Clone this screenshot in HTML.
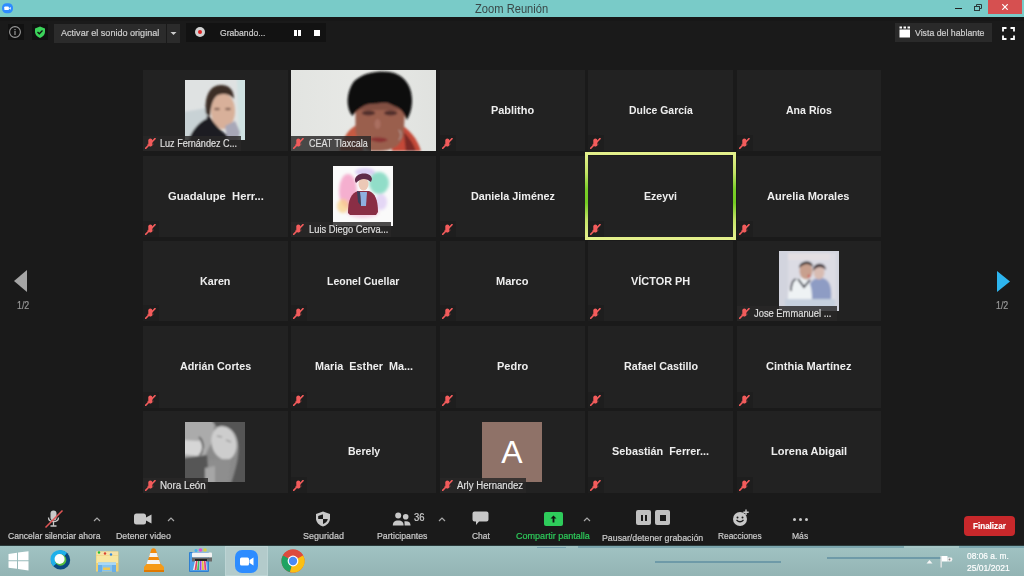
<!DOCTYPE html>
<html><head><meta charset="utf-8">
<style>
*{margin:0;padding:0;box-sizing:border-box}
html,body{width:1024px;height:576px;overflow:hidden;background:#1a1a1a;font-family:"Liberation Sans",sans-serif;position:relative}
.a{position:absolute}
#title{left:0;top:0;width:1024px;height:17px;background:#79cbc8}
#title .t{font-size:12px;color:#3a4848;line-height:15px;white-space:pre}
.tb{position:absolute;color:#cdcdcd;font-size:9.5px;white-space:pre;line-height:11px;-webkit-text-stroke:0.2px currentColor}

.tile{position:absolute;width:144px;height:81px;background:#222}
.nm{position:absolute;top:32.6px;font-weight:bold;font-size:11.5px;color:#eee;white-space:pre;line-height:14px;transform-origin:0 0}
.mic{position:absolute}
.mb{position:absolute;left:0;bottom:0;width:16px;height:16px;background:#1e1e1e}
.mb .mic{left:2px;bottom:2px}
.hl{position:absolute;left:-3px;top:-4px;right:-3px;bottom:-3px;border:3.6px solid #dcee7a;border-image:linear-gradient(#e4f08c 0%,#c4e466 22%,#7acf28 42%,#74cc22 58%,#c4e466 78%,#e4f08c 100%) 1}
.ph{position:absolute;width:60px;height:60px;left:42px;top:10px;background:#ccc;overflow:hidden}
.ph svg,.vid svg{display:block}
.vid{position:absolute;left:0;top:0;width:100%;height:100%;background:#e6e8e6}
.vid svg{width:100%;height:100%}
.av{background:#8f7268;color:#fff;font-size:32px;text-align:center;line-height:60px}
.lab{position:absolute;left:0;bottom:0;height:15.5px;background:rgba(41,40,40,.83)}
.lab .mic{left:2px;bottom:2.5px}
.lab span{position:absolute;top:1.9px;color:#e0e0e0;-webkit-text-stroke:0.15px currentColor;font-size:10px;line-height:14px;white-space:pre;transform-origin:0 0}
</style></head><body>
<div id="title" class="a">
 <svg class="a" style="left:2px;top:3px" width="11" height="10.5" viewBox="0 0 12 11"><rect x="0" y="0" width="12" height="11" rx="5" fill="#2d8cff"/><rect x="2.5" y="3.5" width="5" height="4" rx="1" fill="#fff"/><path d="M7.5 5.5 L9.5 4 V7 Z" fill="#fff"/></svg>
 <div class="a t" style="left:475px;width:auto;top:1.5px;transform:scaleX(.93);transform-origin:0 0">Zoom Reunión</div>
 <div class="a" style="left:955px;top:8px;width:7px;height:1.3px;background:#222"></div>
 <svg class="a" style="left:974px;top:4px" width="8" height="7" viewBox="0 0 8 7"><rect x="0.5" y="2.5" width="5" height="4" fill="none" stroke="#2a3a3a" stroke-width="1"/><path d="M2.5 2.5 V0.5 H7.5 V4.5 H5.5" fill="none" stroke="#2a3a3a" stroke-width="1"/></svg>
 <div class="a" style="left:988px;top:0;width:34px;height:14px;background:#d65050"></div>
 <svg class="a" style="left:1002px;top:4px" width="6" height="6" viewBox="0 0 6 6"><path d="M0.3 0.3 L5.7 5.7 M5.7 0.3 L0.3 5.7" stroke="#fff" stroke-width="1.2"/></svg>
</div>

<!-- top toolbar -->
<div class="a" style="left:0;top:17px;width:1024px;height:4px;background:#171717"></div>
<div class="a" style="left:8px;top:24px;width:16px;height:16px;background:#111"></div>
<svg class="a" style="left:8px;top:25px" width="14" height="14" viewBox="0 0 14 14"><circle cx="7" cy="7" r="5.4" fill="none" stroke="#9a9a9a" stroke-width="1.1"/><rect x="6.4" y="6" width="1.2" height="4" fill="#9a9a9a"/><rect x="6.4" y="4" width="1.2" height="1.2" fill="#9a9a9a"/></svg>
<div class="a" style="left:32px;top:24px;width:16px;height:16px;background:#111"></div>
<svg class="a" style="left:33px;top:25px" width="14" height="14" viewBox="0 0 14 14"><path d="M7 1.5 L12 3.5 V7 C12 10 9.5 12 7 13 C4.5 12 2 10 2 7 V3.5 Z" fill="#3bd35a"/><path d="M4.5 7 L6.3 8.8 L9.5 5.5" fill="none" stroke="#111" stroke-width="1.3"/></svg>
<div class="a" style="left:54px;top:24px;width:112px;height:19px;background:#2b2b2b"></div>
<div class="a" style="left:167px;top:24px;width:13px;height:19px;background:#2b2b2b"></div>
<svg class="a" style="left:170px;top:31px" width="7" height="5" viewBox="0 0 7 5"><path d="M0.5 1 H6.5 L3.5 4 Z" fill="#ccc"/></svg>
<div class="tb" style="left:60.70px;top:27px;color:#d0d0d0;transform:scaleX(0.9544);transform-origin:0 0">Activar el sonido original</div>
<div class="a" style="left:186px;top:23px;width:140px;height:19px;background:#121212"></div>
<svg class="a" style="left:194px;top:26px" width="12" height="12" viewBox="0 0 12 12"><circle cx="6" cy="6" r="5" fill="#d0d0d0"/><circle cx="6" cy="6" r="2" fill="#e02020"/></svg>
<div class="tb" style="left:219.80px;top:27px;color:#d0d0d0;transform:scaleX(0.9040);transform-origin:0 0">Grabando...</div>
<div class="a" style="left:294px;top:30px;width:2.5px;height:6px;background:#fff"></div>
<div class="a" style="left:298px;top:30px;width:2.5px;height:6px;background:#fff"></div>
<div class="a" style="left:314px;top:30px;width:6px;height:6px;background:#fff"></div>

<div class="a" style="left:895px;top:23px;width:97px;height:19px;background:#2a2a2a"></div>
<svg class="a" style="left:899px;top:26px" width="12" height="12" viewBox="0 0 12 12"><rect x="0.5" y="3.5" width="10.5" height="8" fill="#fff"/><rect x="0.5" y="0.5" width="2.5" height="2" fill="#fff"/><rect x="4.5" y="0.5" width="2.5" height="2" fill="#fff"/><rect x="8.5" y="0.5" width="2.5" height="2" fill="#fff"/></svg>
<div class="tb" style="left:914.90px;top:27px;color:#d0d0d0;transform:scaleX(0.9213);transform-origin:0 0">Vista del hablante</div>
<svg class="a" style="left:1002px;top:27px" width="13" height="13" viewBox="0 0 13 13"><path d="M1 4.5 V1 H4.5 M8.5 1 H12 V4.5 M12 8.5 V12 H8.5 M4.5 12 H1 V8.5" fill="none" stroke="#fff" stroke-width="1.8"/></svg>

<!-- side arrows -->
<svg class="a" style="left:13px;top:269px" width="16" height="24" viewBox="0 0 16 24"><path d="M1 12 L14 1 V23 Z" fill="#a5a5a5"/></svg>
<div class="tb" style="left:17px;top:299.5px;color:#999;font-size:10.5px;transform:scaleX(.84);transform-origin:0 0">1/2</div>
<svg class="a" style="left:996px;top:270px" width="16" height="24" viewBox="0 0 16 24"><path d="M1 1 L14 11.5 L1 22 Z" fill="#2db5ef"/></svg>
<div class="tb" style="left:996.3px;top:299.5px;color:#999;font-size:10.5px;transform:scaleX(.84);transform-origin:0 0">1/2</div>

<!--GRID-->
<div id="grid">
<div class="tile" style="left:143px;top:70px;width:145px;height:81px"><div class="ph" style="top:10px"><svg width="60" height="60" viewBox="0 0 60 60"><defs><filter id="blluz" x="-10%" y="-10%" width="120%" height="120%"><feGaussianBlur stdDeviation="0.9"/></filter></defs><rect width="60" height="60" fill="#dfe2e2"/><g filter="url(#blluz)">
<path d="M-2 32 L22 28 L24 62 L-2 62 Z" fill="#c3ced2" opacity=".8"/>
<path d="M52 -2 L62 -2 L62 62 L54 62 Z" fill="#cde2e2" opacity=".9"/>
<ellipse cx="38" cy="31" rx="12" ry="18" fill="#d8b09a"/>
<ellipse cx="32" cy="29" rx="3" ry="1.3" fill="#6a4a40" opacity=".8"/><ellipse cx="43" cy="29" rx="3" ry="1.3" fill="#6a4a40" opacity=".8"/>
<path d="M21 34 C19 16 25 5 36 5 C45 5 49 11 49 19 C45 14 39 13 33 15 C28 18 26 25 25 36 Z" fill="#3d2d25"/>
<circle cx="23" cy="37" r="1.5" fill="#2a1a15"/>
<path d="M3 62 C7 49 15 41 25 37 C30 45 38 54 48 58 L50 62 Z" fill="#1c1c21"/>
<path d="M40 46 L50 41 L55 52 L53 62 L43 62 Z" fill="#a8a8b8"/>
</g></svg></div><div class="lab" style="width:98.4px"><svg class="mic" width="11" height="11" viewBox="0 0 12 12"><rect x="3.6" y="0.6" width="4.4" height="8.6" rx="2.2" fill="#f35c5c"/><path d="M2.2 6.5 Q5.8 11 9.4 6.5" fill="none" stroke="#f35c5c" stroke-width=".8" opacity=".6"/><path d="M0.8 11.2 L10.8 0.8" stroke="#f35c5c" stroke-width="1.9" stroke-linecap="round"/></svg><span style="left:17.20px;transform:scaleX(0.9071)">Luz Fernández C...</span></div></div>
<div class="tile video" style="left:291px;top:70px;width:145px;height:81px"><div class="vid"><svg width="144" height="81" viewBox="0 0 144 81" preserveAspectRatio="none"><defs><filter id="blceat" x="-10%" y="-10%" width="120%" height="120%"><feGaussianBlur stdDeviation="1.3"/></filter><linearGradient id="gceat" x1="0" y1="0" x2="1" y2="0"><stop offset="0" stop-color="#e2e4e1"/><stop offset=".5" stop-color="#e8e9e6"/><stop offset="1" stop-color="#e0e2df"/></linearGradient></defs>
<rect width="144" height="81" fill="url(#gceat)"/><g filter="url(#blceat)">
<path d="M48 81 C52 66 58 58 66 55 L72 81 Z" fill="#c65a42"/>
<path d="M104 52 C118 58 126 70 129 81 L100 81 Z" fill="#c44a38"/>
<path d="M112 62 C118 68 122 74 124 81 L114 81 Z" fill="#7a2a26"/>
<path d="M64 40 C64 34 72 30 88 30 C104 30 113 34 113 42 L112 64 C110 76 100 81 88 81 L80 81 C70 78 65 70 64 60 Z" fill="#9a5e4e"/>
<ellipse cx="77" cy="43" rx="6.5" ry="2.6" fill="#3e2020" opacity=".8"/>
<ellipse cx="99" cy="43" rx="6.5" ry="2.6" fill="#3e2020" opacity=".8"/>
<ellipse cx="86" cy="54" rx="3" ry="5" fill="#b07868" opacity=".7"/><rect x="64" y="32" width="49" height="8" fill="#6a4038" opacity=".5"/>
<path d="M78 69 C84 67 92 67 96 70 C92 73 84 73 78 69 Z" fill="#8a3030"/>
<path d="M61 46 C54 38 55 22 62 12 C70 3 86 0 98 2 C110 4 119 13 120 27 C121 37 118 45 115 50 C113 45 111 41 107 38 C103 36 100 35 96 33 C90 32 84 34 78 34 C72 35 66 39 61 46 Z" fill="#111"/>
<path d="M107 60 C110 62 110 68 107 70" fill="none" stroke="#ccc" stroke-width="1" opacity=".6"/>
</g></svg></div><div class="lab" style="width:80.3px"><svg class="mic" width="11" height="11" viewBox="0 0 12 12"><rect x="3.6" y="0.6" width="4.4" height="8.6" rx="2.2" fill="#f35c5c"/><path d="M2.2 6.5 Q5.8 11 9.4 6.5" fill="none" stroke="#f35c5c" stroke-width=".8" opacity=".6"/><path d="M0.8 11.2 L10.8 0.8" stroke="#f35c5c" stroke-width="1.9" stroke-linecap="round"/></svg><span style="left:17.60px;transform:scaleX(0.8955)">CEAT Tlaxcala</span></div></div>
<div class="tile" style="left:440px;top:70px;width:145px;height:81px"><div class="nm" style="left:50.65px;transform:scaleX(0.9500)">Pablitho</div><div class="mb"><svg class="mic" width="11" height="11" viewBox="0 0 12 12"><rect x="3.6" y="0.6" width="4.4" height="8.6" rx="2.2" fill="#f35c5c"/><path d="M2.2 6.5 Q5.8 11 9.4 6.5" fill="none" stroke="#f35c5c" stroke-width=".8" opacity=".6"/><path d="M0.8 11.2 L10.8 0.8" stroke="#f35c5c" stroke-width="1.9" stroke-linecap="round"/></svg></div></div>
<div class="tile" style="left:588px;top:70px;width:145px;height:81px"><div class="nm" style="left:40.70px;transform:scaleX(0.9056)">Dulce García</div><div class="mb"><svg class="mic" width="11" height="11" viewBox="0 0 12 12"><rect x="3.6" y="0.6" width="4.4" height="8.6" rx="2.2" fill="#f35c5c"/><path d="M2.2 6.5 Q5.8 11 9.4 6.5" fill="none" stroke="#f35c5c" stroke-width=".8" opacity=".6"/><path d="M0.8 11.2 L10.8 0.8" stroke="#f35c5c" stroke-width="1.9" stroke-linecap="round"/></svg></div></div>
<div class="tile" style="left:737px;top:70px;width:144px;height:81px"><div class="nm" style="left:49.00px;transform:scaleX(0.9180)">Ana Ríos</div><div class="mb"><svg class="mic" width="11" height="11" viewBox="0 0 12 12"><rect x="3.6" y="0.6" width="4.4" height="8.6" rx="2.2" fill="#f35c5c"/><path d="M2.2 6.5 Q5.8 11 9.4 6.5" fill="none" stroke="#f35c5c" stroke-width=".8" opacity=".6"/><path d="M0.8 11.2 L10.8 0.8" stroke="#f35c5c" stroke-width="1.9" stroke-linecap="round"/></svg></div></div>
<div class="tile" style="left:143px;top:156px;width:145px;height:81px"><div class="nm" style="left:24.50px;transform:scaleX(0.9735)">Guadalupe  Herr...</div><div class="mb"><svg class="mic" width="11" height="11" viewBox="0 0 12 12"><rect x="3.6" y="0.6" width="4.4" height="8.6" rx="2.2" fill="#f35c5c"/><path d="M2.2 6.5 Q5.8 11 9.4 6.5" fill="none" stroke="#f35c5c" stroke-width=".8" opacity=".6"/><path d="M0.8 11.2 L10.8 0.8" stroke="#f35c5c" stroke-width="1.9" stroke-linecap="round"/></svg></div></div>
<div class="tile" style="left:291px;top:156px;width:145px;height:81px"><div class="ph" style="top:9.5px"><svg width="60" height="60" viewBox="0 0 60 60"><defs><filter id="blluis" x="-10%" y="-10%" width="120%" height="120%"><feGaussianBlur stdDeviation="1.8"/></filter></defs><rect width="60" height="60" fill="#fafafa"/><g filter="url(#blluis)">
<ellipse cx="15" cy="25" rx="9" ry="17" fill="#f49cc4" opacity=".8"/>
<ellipse cx="46" cy="17" rx="10" ry="11" fill="#7fd8c0" opacity=".85"/>
<ellipse cx="10" cy="40" rx="6" ry="7" fill="#f8cf88" opacity=".75"/>
<ellipse cx="32" cy="6" rx="10" ry="4" fill="#c8b0f0" opacity=".6"/>
<ellipse cx="48" cy="36" rx="6" ry="8" fill="#dcc8f4" opacity=".7"/>
<ellipse cx="30" cy="46" rx="16" ry="6" fill="#f4c0dc" opacity=".7"/>
</g><g filter="url(#blluis2)">
<path d="M15 47 C15 34 18 27 25 25 L36 25 C42 27 45 34 45 46 L43 49 L17 49 Z" fill="#8a2e44"/>
<path d="M27 26 L34 26 L33 40 L28 40 Z" fill="#8fb0e0"/>
<path d="M24 25 L27 26 L28 40 L25 36 Z" fill="#38405a"/>
<ellipse cx="30.5" cy="18" rx="5" ry="6.5" fill="#ecc8b6"/>
<path d="M22 15 C21 6 38 5 39 13 L38 16 C33 12 28 12 23 17 Z" fill="#5e2a48"/>
</g><defs><filter id="blluis2" x="-10%" y="-10%" width="120%" height="120%"><feGaussianBlur stdDeviation="0.7"/></filter></defs></svg></div><div class="lab" style="width:100.4px"><svg class="mic" width="11" height="11" viewBox="0 0 12 12"><rect x="3.6" y="0.6" width="4.4" height="8.6" rx="2.2" fill="#f35c5c"/><path d="M2.2 6.5 Q5.8 11 9.4 6.5" fill="none" stroke="#f35c5c" stroke-width=".8" opacity=".6"/><path d="M0.8 11.2 L10.8 0.8" stroke="#f35c5c" stroke-width="1.9" stroke-linecap="round"/></svg><span style="left:17.50px;transform:scaleX(0.9341)">Luis Diego Cerva...</span></div></div>
<div class="tile" style="left:440px;top:156px;width:145px;height:81px"><div class="nm" style="left:30.70px;transform:scaleX(0.9373)">Daniela Jiménez</div><div class="mb"><svg class="mic" width="11" height="11" viewBox="0 0 12 12"><rect x="3.6" y="0.6" width="4.4" height="8.6" rx="2.2" fill="#f35c5c"/><path d="M2.2 6.5 Q5.8 11 9.4 6.5" fill="none" stroke="#f35c5c" stroke-width=".8" opacity=".6"/><path d="M0.8 11.2 L10.8 0.8" stroke="#f35c5c" stroke-width="1.9" stroke-linecap="round"/></svg></div></div>
<div class="tile" style="left:588px;top:156px;width:145px;height:81px"><div class="hl"></div><div class="nm" style="left:55.75px;transform:scaleX(0.9214)">Ezeyvi</div><div class="mb"><svg class="mic" width="11" height="11" viewBox="0 0 12 12"><rect x="3.6" y="0.6" width="4.4" height="8.6" rx="2.2" fill="#f35c5c"/><path d="M2.2 6.5 Q5.8 11 9.4 6.5" fill="none" stroke="#f35c5c" stroke-width=".8" opacity=".6"/><path d="M0.8 11.2 L10.8 0.8" stroke="#f35c5c" stroke-width="1.9" stroke-linecap="round"/></svg></div></div>
<div class="tile" style="left:737px;top:156px;width:144px;height:81px"><div class="nm" style="left:30.35px;transform:scaleX(0.9634)">Aurelia Morales</div><div class="mb"><svg class="mic" width="11" height="11" viewBox="0 0 12 12"><rect x="3.6" y="0.6" width="4.4" height="8.6" rx="2.2" fill="#f35c5c"/><path d="M2.2 6.5 Q5.8 11 9.4 6.5" fill="none" stroke="#f35c5c" stroke-width=".8" opacity=".6"/><path d="M0.8 11.2 L10.8 0.8" stroke="#f35c5c" stroke-width="1.9" stroke-linecap="round"/></svg></div></div>
<div class="tile" style="left:143px;top:241px;width:145px;height:80px"><div class="nm" style="left:57.00px;transform:scaleX(0.9328)">Karen</div><div class="mb"><svg class="mic" width="11" height="11" viewBox="0 0 12 12"><rect x="3.6" y="0.6" width="4.4" height="8.6" rx="2.2" fill="#f35c5c"/><path d="M2.2 6.5 Q5.8 11 9.4 6.5" fill="none" stroke="#f35c5c" stroke-width=".8" opacity=".6"/><path d="M0.8 11.2 L10.8 0.8" stroke="#f35c5c" stroke-width="1.9" stroke-linecap="round"/></svg></div></div>
<div class="tile" style="left:291px;top:241px;width:145px;height:80px"><div class="nm" style="left:36.20px;transform:scaleX(0.9125)">Leonel Cuellar</div><div class="mb"><svg class="mic" width="11" height="11" viewBox="0 0 12 12"><rect x="3.6" y="0.6" width="4.4" height="8.6" rx="2.2" fill="#f35c5c"/><path d="M2.2 6.5 Q5.8 11 9.4 6.5" fill="none" stroke="#f35c5c" stroke-width=".8" opacity=".6"/><path d="M0.8 11.2 L10.8 0.8" stroke="#f35c5c" stroke-width="1.9" stroke-linecap="round"/></svg></div></div>
<div class="tile" style="left:440px;top:241px;width:145px;height:80px"><div class="nm" style="left:55.90px;transform:scaleX(0.9588)">Marco</div><div class="mb"><svg class="mic" width="11" height="11" viewBox="0 0 12 12"><rect x="3.6" y="0.6" width="4.4" height="8.6" rx="2.2" fill="#f35c5c"/><path d="M2.2 6.5 Q5.8 11 9.4 6.5" fill="none" stroke="#f35c5c" stroke-width=".8" opacity=".6"/><path d="M0.8 11.2 L10.8 0.8" stroke="#f35c5c" stroke-width="1.9" stroke-linecap="round"/></svg></div></div>
<div class="tile" style="left:588px;top:241px;width:145px;height:80px"><div class="nm" style="left:43.00px;transform:scaleX(0.9484)">VÍCTOR PH</div><div class="mb"><svg class="mic" width="11" height="11" viewBox="0 0 12 12"><rect x="3.6" y="0.6" width="4.4" height="8.6" rx="2.2" fill="#f35c5c"/><path d="M2.2 6.5 Q5.8 11 9.4 6.5" fill="none" stroke="#f35c5c" stroke-width=".8" opacity=".6"/><path d="M0.8 11.2 L10.8 0.8" stroke="#f35c5c" stroke-width="1.9" stroke-linecap="round"/></svg></div></div>
<div class="tile" style="left:737px;top:241px;width:144px;height:80px"><div class="ph" style="top:10px"><svg width="60" height="60" viewBox="0 0 60 60"><defs><filter id="bljose" x="-10%" y="-10%" width="120%" height="120%"><feGaussianBlur stdDeviation="1.0"/></filter></defs><rect width="60" height="60" fill="#d2d4de"/><g filter="url(#bljose)">
<rect x="9" y="2" width="48" height="48" fill="#dcdce4"/>
<rect x="9" y="2" width="42" height="7" fill="#e4dfe2"/>
<path d="M29 48 C28 34 32 27 41 27 C50 27 53 34 52 48 Z" fill="#8e9cc4"/>
<ellipse cx="40" cy="21" rx="5.5" ry="7.5" fill="#d8bcb2"/>
<path d="M34 20 C33 11 47 10 47 19 C43 15 38 15 34 20 Z" fill="#3e3238"/>
<path d="M9 48 C9 34 13 27 22 27 C30 27 33 34 33 48 Z" fill="#eef2f4"/>
<path d="M12 40 C12 33 14 29 17 28 M19 28 L25 36 L31 29" fill="none" stroke="#2c2e3c" stroke-width="1.8"/>
<ellipse cx="27" cy="20" rx="6.5" ry="8.5" fill="#c8a08e"/>
<circle cx="30" cy="25" r="1.5" fill="#d05050" opacity=".8"/>
<path d="M20 17 C20 9 34 8 34 16 C30 12 25 12 20 17 Z" fill="#262024"/>
<rect x="6" y="48" width="50" height="12" fill="#c6d0de"/>
</g></svg></div><div class="lab" style="width:100.4px"><svg class="mic" width="11" height="11" viewBox="0 0 12 12"><rect x="3.6" y="0.6" width="4.4" height="8.6" rx="2.2" fill="#f35c5c"/><path d="M2.2 6.5 Q5.8 11 9.4 6.5" fill="none" stroke="#f35c5c" stroke-width=".8" opacity=".6"/><path d="M0.8 11.2 L10.8 0.8" stroke="#f35c5c" stroke-width="1.9" stroke-linecap="round"/></svg><span style="left:16.60px;transform:scaleX(0.9354)">Jose Emmanuel ...</span></div></div>
<div class="tile" style="left:143px;top:326px;width:145px;height:81.5px"><div class="nm" style="left:36.50px;transform:scaleX(0.9355)">Adrián Cortes</div><div class="mb"><svg class="mic" width="11" height="11" viewBox="0 0 12 12"><rect x="3.6" y="0.6" width="4.4" height="8.6" rx="2.2" fill="#f35c5c"/><path d="M2.2 6.5 Q5.8 11 9.4 6.5" fill="none" stroke="#f35c5c" stroke-width=".8" opacity=".6"/><path d="M0.8 11.2 L10.8 0.8" stroke="#f35c5c" stroke-width="1.9" stroke-linecap="round"/></svg></div></div>
<div class="tile" style="left:291px;top:326px;width:145px;height:81.5px"><div class="nm" style="left:23.60px;transform:scaleX(0.9413)">Maria  Esther  Ma...</div><div class="mb"><svg class="mic" width="11" height="11" viewBox="0 0 12 12"><rect x="3.6" y="0.6" width="4.4" height="8.6" rx="2.2" fill="#f35c5c"/><path d="M2.2 6.5 Q5.8 11 9.4 6.5" fill="none" stroke="#f35c5c" stroke-width=".8" opacity=".6"/><path d="M0.8 11.2 L10.8 0.8" stroke="#f35c5c" stroke-width="1.9" stroke-linecap="round"/></svg></div></div>
<div class="tile" style="left:440px;top:326px;width:145px;height:81.5px"><div class="nm" style="left:56.50px;transform:scaleX(0.9563)">Pedro</div><div class="mb"><svg class="mic" width="11" height="11" viewBox="0 0 12 12"><rect x="3.6" y="0.6" width="4.4" height="8.6" rx="2.2" fill="#f35c5c"/><path d="M2.2 6.5 Q5.8 11 9.4 6.5" fill="none" stroke="#f35c5c" stroke-width=".8" opacity=".6"/><path d="M0.8 11.2 L10.8 0.8" stroke="#f35c5c" stroke-width="1.9" stroke-linecap="round"/></svg></div></div>
<div class="tile" style="left:588px;top:326px;width:145px;height:81.5px"><div class="nm" style="left:35.60px;transform:scaleX(0.9354)">Rafael Castillo</div><div class="mb"><svg class="mic" width="11" height="11" viewBox="0 0 12 12"><rect x="3.6" y="0.6" width="4.4" height="8.6" rx="2.2" fill="#f35c5c"/><path d="M2.2 6.5 Q5.8 11 9.4 6.5" fill="none" stroke="#f35c5c" stroke-width=".8" opacity=".6"/><path d="M0.8 11.2 L10.8 0.8" stroke="#f35c5c" stroke-width="1.9" stroke-linecap="round"/></svg></div></div>
<div class="tile" style="left:737px;top:326px;width:144px;height:81.5px"><div class="nm" style="left:28.70px;transform:scaleX(0.9629)">Cinthia Martínez</div><div class="mb"><svg class="mic" width="11" height="11" viewBox="0 0 12 12"><rect x="3.6" y="0.6" width="4.4" height="8.6" rx="2.2" fill="#f35c5c"/><path d="M2.2 6.5 Q5.8 11 9.4 6.5" fill="none" stroke="#f35c5c" stroke-width=".8" opacity=".6"/><path d="M0.8 11.2 L10.8 0.8" stroke="#f35c5c" stroke-width="1.9" stroke-linecap="round"/></svg></div></div>
<div class="tile" style="left:143px;top:411px;width:145px;height:82px"><div class="ph" style="top:11px"><svg width="60" height="60" viewBox="0 0 60 60"><defs><filter id="blnora" x="-10%" y="-10%" width="120%" height="120%"><feGaussianBlur stdDeviation="1.3"/></filter></defs><rect width="60" height="60" fill="#8a8a8a"/><g filter="url(#blnora)">
<path d="M-2 -2 L30 -2 L28 18 L20 34 L-2 36 Z" fill="#ababab"/>
<path d="M-2 18 L15 19 L19 28 L12 34 L-2 32 Z" fill="#d6d6d6"/>
<path d="M14 15 C19 19 19 28 15 33" fill="none" stroke="#3a3a3a" stroke-width="1.3"/>
<path d="M-2 36 L22 33 L24 62 L-2 62 Z" fill="#575757"/>
<path d="M26 -2 L62 -2 L62 62 L46 62 C51 46 55 34 53 20 C51 8 42 2 32 5 Z" fill="#555"/>
<ellipse cx="39" cy="21" rx="12.5" ry="17" transform="rotate(-12 39 21)" fill="#cdcdcd"/>
<path d="M32 14 L37 15 M41 18 L46 20" stroke="#777" stroke-width=".9"/>
<path d="M24 38 L46 37 L43 62 L22 62 Z" fill="#8e8e8e"/>
<path d="M20 46 L30 44 L30 62 L20 62 Z" fill="#a6a6a6"/>
</g></svg></div><div class="lab" style="width:65.0px"><svg class="mic" width="11" height="11" viewBox="0 0 12 12"><rect x="3.6" y="0.6" width="4.4" height="8.6" rx="2.2" fill="#f35c5c"/><path d="M2.2 6.5 Q5.8 11 9.4 6.5" fill="none" stroke="#f35c5c" stroke-width=".8" opacity=".6"/><path d="M0.8 11.2 L10.8 0.8" stroke="#f35c5c" stroke-width="1.9" stroke-linecap="round"/></svg><span style="left:17.20px;transform:scaleX(0.9787)">Nora León</span></div></div>
<div class="tile" style="left:291px;top:411px;width:145px;height:82px"><div class="nm" style="left:56.85px;transform:scaleX(0.9143)">Berely</div><div class="mb"><svg class="mic" width="11" height="11" viewBox="0 0 12 12"><rect x="3.6" y="0.6" width="4.4" height="8.6" rx="2.2" fill="#f35c5c"/><path d="M2.2 6.5 Q5.8 11 9.4 6.5" fill="none" stroke="#f35c5c" stroke-width=".8" opacity=".6"/><path d="M0.8 11.2 L10.8 0.8" stroke="#f35c5c" stroke-width="1.9" stroke-linecap="round"/></svg></div></div>
<div class="tile" style="left:440px;top:411px;width:145px;height:82px"><div class="ph av" style="top:11px">A</div><div class="lab" style="width:85.9px"><svg class="mic" width="11" height="11" viewBox="0 0 12 12"><rect x="3.6" y="0.6" width="4.4" height="8.6" rx="2.2" fill="#f35c5c"/><path d="M2.2 6.5 Q5.8 11 9.4 6.5" fill="none" stroke="#f35c5c" stroke-width=".8" opacity=".6"/><path d="M0.8 11.2 L10.8 0.8" stroke="#f35c5c" stroke-width="1.9" stroke-linecap="round"/></svg><span style="left:16.75px;transform:scaleX(0.9601)">Arly Hernandez</span></div></div>
<div class="tile" style="left:588px;top:411px;width:145px;height:82px"><div class="nm" style="left:24.30px;transform:scaleX(0.9427)">Sebastián  Ferrer...</div><div class="mb"><svg class="mic" width="11" height="11" viewBox="0 0 12 12"><rect x="3.6" y="0.6" width="4.4" height="8.6" rx="2.2" fill="#f35c5c"/><path d="M2.2 6.5 Q5.8 11 9.4 6.5" fill="none" stroke="#f35c5c" stroke-width=".8" opacity=".6"/><path d="M0.8 11.2 L10.8 0.8" stroke="#f35c5c" stroke-width="1.9" stroke-linecap="round"/></svg></div></div>
<div class="tile" style="left:737px;top:411px;width:144px;height:82px"><div class="nm" style="left:33.90px;transform:scaleX(0.9589)">Lorena Abigail</div><div class="mb"><svg class="mic" width="11" height="11" viewBox="0 0 12 12"><rect x="3.6" y="0.6" width="4.4" height="8.6" rx="2.2" fill="#f35c5c"/><path d="M2.2 6.5 Q5.8 11 9.4 6.5" fill="none" stroke="#f35c5c" stroke-width=".8" opacity=".6"/><path d="M0.8 11.2 L10.8 0.8" stroke="#f35c5c" stroke-width="1.9" stroke-linecap="round"/></svg></div></div>
</div>
<!--/GRID-->
<!-- bottom toolbar -->
<svg class="a" style="left:44px;top:509px" width="20" height="20" viewBox="0 0 20 20"><rect x="6.5" y="1.5" width="6" height="10" rx="3" fill="#c8c8c8"/><path d="M4.5 8.5 C4.5 14 14.5 14 14.5 8.5 M9.5 13 V16.5 M6.5 17 H12.5" fill="none" stroke="#c8c8c8" stroke-width="1.3"/><path d="M1.5 18.5 L18.5 1.5" stroke="#e05555" stroke-width="1.6"/></svg>
<svg class="a" style="left:93px;top:515.5px" width="8" height="6" viewBox="0 0 8 6"><path d="M1 5 L4 2 L7 5" fill="none" stroke="#a8a8a8" stroke-width="1.2"/></svg>
<div class="tb" style="left:7.50px;top:530px;transform:scaleX(0.9019);transform-origin:0 0">Cancelar silenciar ahora</div>
<svg class="a" style="left:133px;top:513px" width="20" height="12" viewBox="0 0 20 12"><rect x="1" y="0.5" width="12" height="11" rx="2.5" fill="#c8c8c8"/><path d="M13 4.5 L18.5 1.5 V10.5 L13 7.5 Z" fill="#c8c8c8"/></svg>
<svg class="a" style="left:167px;top:515.5px" width="8" height="6" viewBox="0 0 8 6"><path d="M1 5 L4 2 L7 5" fill="none" stroke="#a8a8a8" stroke-width="1.2"/></svg>
<div class="tb" style="left:116.30px;top:530px;transform:scaleX(0.9271);transform-origin:0 0">Detener video</div>

<svg class="a" style="left:315px;top:511px" width="16" height="16" viewBox="0 0 16 16"><path d="M8 0.5 L15 3 V7.5 C15 11.5 11.5 14.5 8 15.5 C4.5 14.5 1 11.5 1 7.5 V3 Z" fill="#c8c8c8"/><path d="M8 3 V13 C10 12.2 12.5 10.5 12.8 8 H3.2 V5 L8 3.2" fill="#1a1a1a"/></svg>
<div class="tb" style="left:302.70px;top:530px;transform:scaleX(0.9442);transform-origin:0 0">Seguridad</div>
<svg class="a" style="left:392px;top:512px" width="20" height="14" viewBox="0 0 20 14"><circle cx="6.2" cy="3.6" r="3" fill="#c8c8c8"/><circle cx="13.7" cy="4.7" r="2.8" fill="#c8c8c8"/><path d="M0.8 13.5 C0.8 10 2.5 8.4 6.2 8.4 C9.9 8.4 11.6 10 11.6 13.5 Z" fill="#c8c8c8"/><path d="M12.6 13.5 C12.6 11.2 12.5 10.2 12.2 9.6 C12.8 9.3 13.4 9.2 14 9.2 C17 9.2 18.6 10.6 18.6 13.5 Z" fill="#c8c8c8"/></svg>
<div class="tb" style="left:414.3px;top:511.8px;font-size:10.5px;transform:scaleX(.9);transform-origin:0 0">36</div>
<svg class="a" style="left:438px;top:515.5px" width="8" height="6" viewBox="0 0 8 6"><path d="M1 5 L4 2 L7 5" fill="none" stroke="#a8a8a8" stroke-width="1.2"/></svg>
<div class="tb" style="left:376.50px;top:530px;transform:scaleX(0.9182);transform-origin:0 0">Participantes</div>
<svg class="a" style="left:472px;top:511px" width="17" height="15" viewBox="0 0 17 15"><path d="M2.5 0.5 H14.5 Q16.5 0.5 16.5 2.5 V8.5 Q16.5 10.5 14.5 10.5 H7 L4 14 V10.5 H2.5 Q0.5 10.5 0.5 8.5 V2.5 Q0.5 0.5 2.5 0.5 Z" fill="#c8c8c8"/></svg>
<div class="tb" style="left:471.50px;top:530px;transform:scaleX(0.8900);transform-origin:0 0">Chat</div>

<div class="a" style="left:544px;top:512px;width:19px;height:14px;background:#2ecc5b;border-radius:2px"></div>
<svg class="a" style="left:550px;top:515px" width="7" height="8" viewBox="0 0 7 8"><path d="M3.5 0.5 L6.5 3.5 H4.4 V7.5 H2.6 V3.5 H0.5 Z" fill="#111"/></svg>
<svg class="a" style="left:583px;top:515.5px" width="8" height="6" viewBox="0 0 8 6"><path d="M1 5 L4 2 L7 5" fill="none" stroke="#a8a8a8" stroke-width="1.2"/></svg>
<div class="tb" style="left:516.30px;top:530px;color:#2ecc5b;transform:scaleX(0.9513);transform-origin:0 0">Compartir pantalla</div>
<div class="a" style="left:636px;top:510px;width:15px;height:15px;background:#c0c0c0;border-radius:2px"></div>
<div class="a" style="left:641px;top:514.5px;width:2.2px;height:6px;background:#1a1a1a"></div>
<div class="a" style="left:645px;top:514.5px;width:2.2px;height:6px;background:#1a1a1a"></div>
<div class="a" style="left:655px;top:510px;width:15px;height:15px;background:#c0c0c0;border-radius:2px"></div>
<div class="a" style="left:659.5px;top:514.5px;width:6px;height:6px;background:#1a1a1a"></div>
<div class="tb" style="left:602.30px;top:532px;transform:scaleX(0.9257);transform-origin:0 0">Pausar/detener grabación</div>
<svg class="a" style="left:731px;top:509px" width="18" height="18" viewBox="0 0 18 18"><circle cx="9" cy="10" r="7" fill="#c8c8c8"/><circle cx="6.5" cy="8.5" r="1" fill="#1a1a1a"/><circle cx="11.5" cy="8.5" r="1" fill="#1a1a1a"/><path d="M5.5 11 Q9 14.5 12.5 11" fill="none" stroke="#1a1a1a" stroke-width="1.2"/><path d="M15 0.5 V6 M12.3 3.2 H17.7" stroke="#c8c8c8" stroke-width="1.4"/></svg>
<div class="tb" style="left:717.60px;top:530px;transform:scaleX(0.8800);transform-origin:0 0">Reacciones</div>
<div class="a" style="left:792.5px;top:517.5px;width:3.2px;height:3.2px;border-radius:50%;background:#c8c8c8"></div>
<div class="a" style="left:798.5px;top:517.5px;width:3.2px;height:3.2px;border-radius:50%;background:#c8c8c8"></div>
<div class="a" style="left:804.5px;top:517.5px;width:3.2px;height:3.2px;border-radius:50%;background:#c8c8c8"></div>
<div class="tb" style="left:792.00px;top:530px;transform:scaleX(0.9000);transform-origin:0 0">Más</div>
<div class="a" style="left:964px;top:516px;width:51px;height:20px;background:#c8282b;border-radius:4px"></div>
<div class="tb" style="left:972.80px;top:520px;color:#fff;font-weight:bold;transform:scaleX(0.8513);transform-origin:0 0">Finalizar</div>

<!-- taskbar -->
<div class="a" style="left:0;top:545px;width:1024px;height:31px;background:linear-gradient(#a1c3c3,#93b4b4)"></div>
<div class="a" style="left:0;top:545px;width:1024px;height:1px;background:#2a3a3a"></div>
<svg class="a" style="left:8px;top:551px" width="21" height="20" viewBox="0 0 21 20"><path d="M0.5 3 L9 1.8 V9.3 H0.5 Z M10 1.6 L20.5 0.2 V9.3 H10 Z M0.5 10.3 H9 V17.8 L0.5 16.7 Z M10 10.3 H20.5 V19.6 L10 18.1 Z" fill="#fff"/></svg>
<svg class="a" style="left:50px;top:549px" width="22" height="22" viewBox="0 0 22 22"><circle cx="10.6" cy="11" r="9.6" fill="#0b4a82"/><path d="M17 3.8 A9.6 9.6 0 0 0 3.2 17.2 L6.5 14.5 A5.5 5.5 0 0 1 14.5 7 Z" fill="#1eb0ea"/><circle cx="10.6" cy="11" r="5.8" fill="#58be3e"/><circle cx="9.6" cy="10" r="5" fill="#fdfdfd"/></svg>
<svg class="a" style="left:96px;top:551px" width="23" height="21" viewBox="0 0 23 21"><rect x="0" y="0.5" width="22.5" height="20" fill="#f0d070"/><rect x="0.5" y="0.5" width="21.5" height="4" fill="#f6e2a8"/><circle cx="3" cy="1.5" r="1.2" fill="#22c030"/><circle cx="9" cy="2.5" r="1.2" fill="#d84030"/><circle cx="15" cy="3.5" r="1.2" fill="#2e88e0"/><rect x="0.5" y="5" width="21.5" height="7" fill="#f8e6a0"/><rect x="2" y="11.5" width="18" height="9" fill="#86c4ee"/><rect x="2" y="11.5" width="18" height="2.5" fill="#a8d8f6"/><rect x="7" y="16.5" width="7" height="2.5" fill="#f0c850"/><rect x="2" y="14" width="4" height="7" fill="#6aaee6"/><rect x="16" y="14" width="4" height="7" fill="#6aaee6"/></svg>
<svg class="a" style="left:143px;top:548px" width="22" height="25" viewBox="0 0 22 25"><path d="M8.5 1 Q10.5 -0.5 12.5 1 L18 17 H3.5 Z" fill="#f28a0c"/><path d="M7.2 5 H13.8 L15 9 H6 Z" fill="#f4f4f4"/><path d="M4.8 12 H16.2 L17.4 16 H3.6 Z" fill="#f4f4f4"/><path d="M3.5 16 H18 L21 19 V24 H1 V19 Z" fill="#f59a18"/><rect x="1" y="22" width="20" height="2" fill="#e07800"/></svg>
<svg class="a" style="left:188px;top:548px" width="25" height="25" viewBox="0 0 25 25"><rect x="1" y="4" width="20" height="20" rx="1" fill="#2f7fd0"/><rect x="2" y="5" width="18" height="18" fill="#4fa0e8"/><circle cx="8" cy="2.5" r="1.5" fill="#40b0f0"/><circle cx="12.5" cy="2" r="1.8" fill="#e050d0"/><circle cx="17" cy="2" r="1.8" fill="#d8d040"/><rect x="4" y="4.5" width="20" height="5" rx="1" fill="#f4f4f4"/><rect x="4" y="9.5" width="20" height="4" fill="#6a6a6a"/><rect x="7" y="11" width="12" height="2" fill="#222"/><path d="M7 13 L5 22 H19 L18 13 Z" fill="#f0f0f0"/><path d="M8 13 L6.5 22 H8.5 L9.5 13 Z" fill="#e04060"/><path d="M10 13 L9 22 H11 L11.5 13 Z" fill="#40c060"/><path d="M12 13 L11.5 22 H13.5 L13.5 13 Z" fill="#a040e0"/><path d="M14 13 L14 22 H16 L15.5 13 Z" fill="#e0c040"/><path d="M16 13 L16.5 22 H18.5 L17.5 13 Z" fill="#e04080"/></svg>
<div class="a" style="left:224.6px;top:546px;width:43.6px;height:30px;background:#b3cbcb;box-shadow:inset 0 0 0 1px #bcd4d4"></div>
<svg class="a" style="left:235px;top:549.8px" width="23" height="23" viewBox="0 0 23 23"><rect x="0" y="0" width="23" height="23" rx="7" fill="#2d8cff"/><rect x="5" y="7.5" width="9" height="8" rx="1.5" fill="#fff"/><path d="M14.5 10 L18.5 7.5 V15.5 L14.5 13 Z" fill="#fff"/></svg>
<svg class="a" style="left:281px;top:549px" width="24" height="24" viewBox="0 0 24 24"><circle cx="12" cy="12" r="11.5" fill="#dd4b3e"/><path d="M12 12 L2 6.2 A11.5 11.5 0 0 0 9 23.1 Z" fill="#1ea362"/><path d="M12 12 L22 6.2 A11.5 11.5 0 0 1 9 23.1 Z" fill="#fbc013"/><path d="M12 12 L2 6.2 A11.5 11.5 0 0 1 22 6.2 Z" fill="#dd4b3e"/><circle cx="12" cy="12" r="5.4" fill="#fff"/><circle cx="12" cy="12" r="4.2" fill="#4a8af4"/></svg>
<div class="a" style="left:537px;top:546.5px;width:29px;height:1.5px;background:#78a2ae"></div>
<div class="a" style="left:578px;top:546px;width:446px;height:2px;background:#7ca6ae"></div>
<div class="a" style="left:904px;top:546px;width:55px;height:2px;background:#a6c6c6"></div>
<div class="a" style="left:655px;top:561px;width:126px;height:1.5px;background:#6e9aa8"></div>
<div class="a" style="left:827px;top:557px;width:114px;height:1.5px;background:#6e9aa8"></div>
<svg class="a" style="left:925.5px;top:559px" width="7" height="5" viewBox="0 0 7 5"><path d="M0.5 4.5 L3.5 1 L6.5 4.5 Z" fill="#f4f4f4"/></svg>
<svg class="a" style="left:940px;top:555px" width="14" height="13" viewBox="0 0 14 13"><rect x="0.5" y="1" width="1.3" height="11.5" fill="#e8e8e8"/><path d="M1.8 1 H7.5 V6.5 H1.8 Z" fill="#fff"/><path d="M7.5 2.5 H11.5 L12.5 4 L11.5 6.5 H7.5 Z" fill="#f4f4f4"/><circle cx="9.5" cy="4.5" r="1" fill="#888"/></svg>
<div class="tb" style="left:967.30px;top:550px;color:#fff;font-size:9.5px;transform:scaleX(0.8809);transform-origin:0 0">08:06 a. m.</div>
<div class="tb" style="left:966.50px;top:562px;color:#fff;font-size:9.5px;transform:scaleX(0.8979);transform-origin:0 0">25/01/2021</div>
</body></html>
